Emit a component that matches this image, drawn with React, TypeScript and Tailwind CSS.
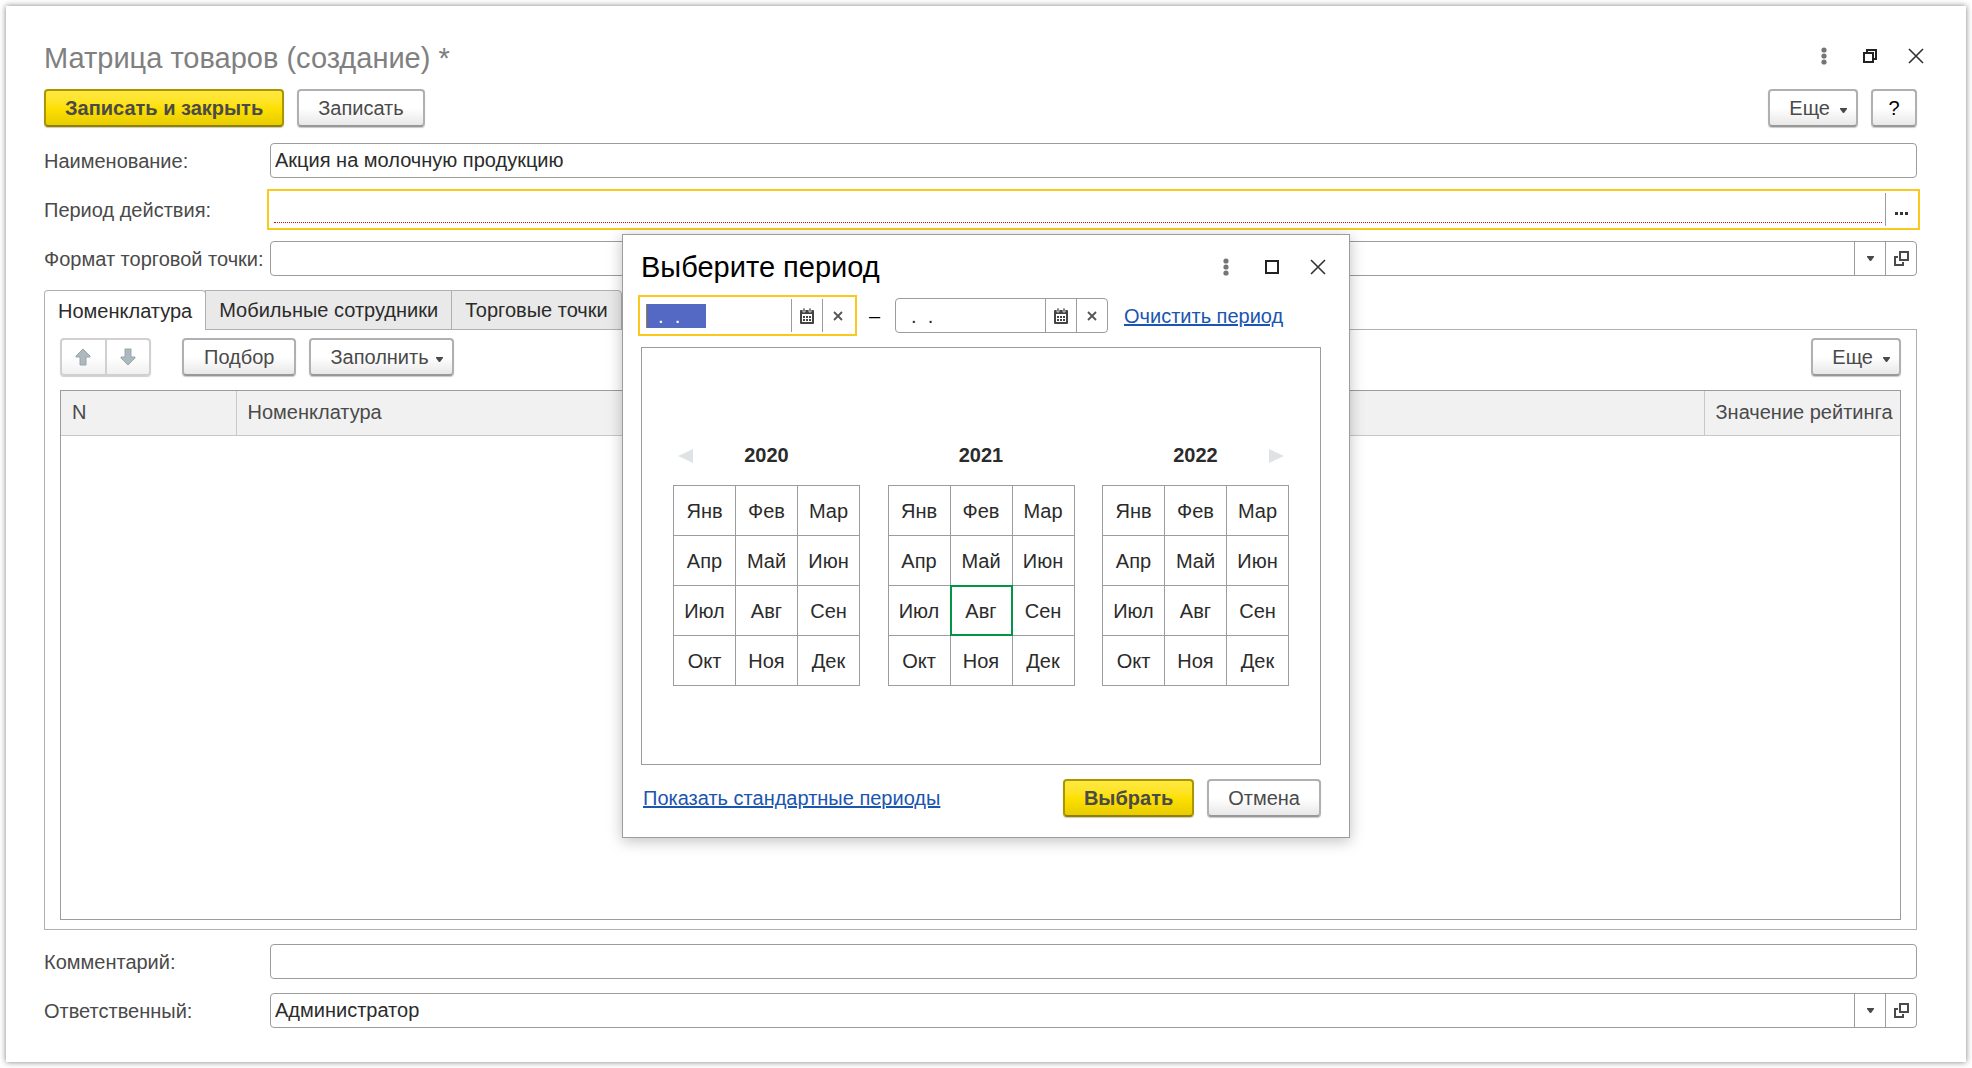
import type { ReactNode } from 'react'

const MONTHS = ['Янв', 'Фев', 'Мар', 'Апр', 'Май', 'Июн', 'Июл', 'Авг', 'Сен', 'Окт', 'Ноя', 'Дек']
const YEARS = [2020, 2021, 2022]
const ROWS = [0, 3, 6, 9]

function Caret({ className = '' }: { className?: string }) {
  return (
    <svg width="7" height="5" viewBox="0 0 7 5" fill="#4a4a4a" aria-hidden="true" className={className}>
      <path d="M0 0h7v1L4 5H3L0 1z" />
    </svg>
  )
}

function Dots() {
  return (
    <svg width="6" height="18" viewBox="0 0 6 18" fill="#757575" aria-hidden="true">
      <circle cx="3" cy="3" r="2.6" />
      <circle cx="3" cy="9" r="2.6" />
      <circle cx="3" cy="15" r="2.6" />
    </svg>
  )
}

function Cross() {
  return (
    <svg width="16" height="16" viewBox="0 0 16 16" stroke="#333" strokeWidth="1.6" aria-hidden="true">
      <path d="M1 1l14 14M15 1L1 15" />
    </svg>
  )
}

function SmallCross() {
  return (
    <svg width="10" height="10" viewBox="0 0 10 10" stroke="#555" strokeWidth="1.8" aria-hidden="true">
      <path d="M1 1l8 8M9 1L1 9" />
    </svg>
  )
}

function OpenIcon() {
  return (
    <svg width="15" height="15" viewBox="0 0 15 15" fill="none" stroke="#4a4a4a" strokeWidth="2" aria-hidden="true">
      <path d="M6 1h8v8H6zM4 6H1v8h8v-3" />
    </svg>
  )
}

function CalendarIcon() {
  return (
    <svg width="14" height="16" viewBox="0 0 14 16" aria-hidden="true">
      <path d="M0 3q0-1 1-1h12q1 0 1 1v12q0 1-1 1H1q-1 0-1-1z" fill="#444" />
      <path d="M2 6h10v8H2z" fill="#fff" />
      <path d="M3 0h2v4H3zM9 0h2v4H9z" fill="#444" stroke="#fff" strokeWidth="0.7" />
      <path d="M3 8h2v2H3zM6 8h2v2H6zM9 8h2v2H9zM3 11h2v2H3zM6 11h2v2H6zM9 11h2v2H9z" fill="#444" />
    </svg>
  )
}

function WindowButton({ children, label }: { children: ReactNode; label: string }) {
  return (
    <button type="button" aria-label={label} className="flex h-8 w-[46px] items-center justify-center">
      {children}
    </button>
  )
}

function Button({ children, className = 'px-[19px]', label }: { children: ReactNode; className?: string; label?: string }) {
  return (
    <button
      type="button"
      aria-label={label}
      className={`flex h-[38px] items-center justify-center rounded-[4px] border-2 border-[#b0b0b0] border-b-[#989898] bg-linear-to-b from-white from-50% to-[#e8e8e8] text-[#4a4a4a] shadow-[0_1px_1px_#c8c8c8] ${className}`}
    >
      {children}
    </button>
  )
}

function PrimaryButton({ children }: { children: ReactNode }) {
  return (
    <button
      type="button"
      className="flex h-[38px] items-center justify-center rounded-[4px] border-2 border-[#ab9600] border-b-[#918000] bg-linear-to-b from-[#ffe940] via-[#fde000] to-[#e8cc00] px-[19px] font-bold text-[#4a4a4a] shadow-[0_1px_1px_#c8c8c8]"
    >
      {children}
    </button>
  )
}

function FieldButton({ children, label }: { children: ReactNode; label: string }) {
  return (
    <button
      type="button"
      aria-label={label}
      className="flex w-[31px] shrink-0 items-center justify-center self-stretch border-l border-[#9c9c9c]"
    >
      {children}
    </button>
  )
}

type FieldProps = { id: string; label: string; value?: string; children?: ReactNode }

function Field({ id, label, value = '', children }: FieldProps) {
  return (
    <div className="grid grid-cols-[226px_1fr] items-center">
      <label htmlFor={id} className="whitespace-nowrap">{label}</label>
      <div className="flex h-[35px] items-center rounded-[4px] border border-[#9c9c9c] bg-white">
        <input id={id} defaultValue={value} className="h-full min-w-0 flex-1 px-1 text-[#2b2b2b] outline-none" />
        {children}
      </div>
    </div>
  )
}

function RefButtons() {
  return (
    <>
      <FieldButton label="Выбрать из списка"><Caret /></FieldButton>
      <FieldButton label="Открыть"><OpenIcon /></FieldButton>
    </>
  )
}

function Year({ year }: { year: number }) {
  return (
    <table className="w-[187px] table-fixed border-collapse text-center text-[#2b2b2b]">
      <caption className="pb-[18px] font-bold leading-6">{year}</caption>
      <tbody>
        {ROWS.map((row) => (
          <tr key={row}>
            {MONTHS.slice(row, row + 3).map((month) => (
              <td key={month} className="h-[50px] border border-[#9c9c9c] p-0">
                <button
                  type="button"
                  className={
                    year === 2021 && month === 'Авг'
                      ? 'size-full outline-2 -outline-offset-1 outline-[#009646]'
                      : 'size-full'
                  }
                >
                  {month}
                </button>
              </td>
            ))}
          </tr>
        ))}
      </tbody>
    </table>
  )
}

function PeriodDialog() {
  return (
    <div className="absolute inset-0 flex items-center justify-center pt-1">
      <section
        role="dialog"
        aria-labelledby="period-title"
        className="w-[728px] border border-[#9c9c9c] bg-white pt-[14px] pr-7 pb-5 pl-[18px] shadow-[0_3px_14px_rgba(0,0,0,0.25)]"
      >
        <header className="flex h-9 items-center justify-between">
          <h2 id="period-title" className="text-[29px] text-black">Выберите период</h2>
          <div className="-mr-5 flex">
            <WindowButton label="Меню"><Dots /></WindowButton>
            <WindowButton label="Развернуть">
              <svg width="14" height="14" viewBox="0 0 14 14" fill="none" stroke="#222" strokeWidth="2" aria-hidden="true">
                <path d="M1 1h12v12H1z" />
              </svg>
            </WindowButton>
            <WindowButton label="Закрыть"><Cross /></WindowButton>
          </div>
        </header>

        <div className="mt-[13px] flex items-center">
          <div className="flex h-[35px] w-[213px] items-center border border-white outline-2 outline-offset-1 outline-[#fac81e]">
            <input
              aria-label="Начало периода"
              defaultValue={'\u00a0\u00a0.\u00a0\u00a0.'}
              className="ml-1 h-6 w-[60px] border-l border-[#a08040] bg-[#5469c3] text-white outline-none"
            />
            <span className="flex-1" />
            <FieldButton label="Календарь"><CalendarIcon /></FieldButton>
            <FieldButton label="Очистить"><SmallCross /></FieldButton>
          </div>
          <span className="w-[41px] text-center text-black">–</span>
          <div className="flex h-[35px] w-[213px] items-center rounded-[4px] border border-[#9c9c9c]">
            <input
              aria-label="Конец периода"
              defaultValue={'\u00a0\u00a0.\u00a0\u00a0.'}
              className="ml-1 min-w-0 flex-1 text-[#2b2b2b] outline-none"
            />
            <FieldButton label="Календарь"><CalendarIcon /></FieldButton>
            <FieldButton label="Очистить"><SmallCross /></FieldButton>
          </div>
          <a href="#clear" className="ml-4 whitespace-nowrap text-[#1a55b0] underline">Очистить период</a>
        </div>

        <div className="relative mt-[14px] flex h-[418px] items-start justify-between border border-[#9c9c9c] px-[31px] pt-[95px]">
          {YEARS.map((year) => <Year key={year} year={year} />)}
          <button type="button" aria-label="Предыдущие годы" className="absolute top-[101px] left-9">
            <svg width="15" height="14" viewBox="0 0 15 14" fill="#dfe3e5" aria-hidden="true"><path d="M15 0v14L0 7z" /></svg>
          </button>
          <button type="button" aria-label="Следующие годы" className="absolute top-[101px] right-9">
            <svg width="15" height="14" viewBox="0 0 15 14" fill="#dfe3e5" aria-hidden="true"><path d="M0 0v14l15-7z" /></svg>
          </button>
        </div>

        <footer className="mt-[14px] flex items-center gap-[13px]">
          <a href="#standard" className="mr-auto pl-0.5 text-[#1a55b0] underline">Показать стандартные периоды</a>
          <PrimaryButton>Выбрать</PrimaryButton>
          <Button>Отмена</Button>
        </footer>
      </section>
    </div>
  )
}

export default function App() {
  return (
    <div className="relative flex min-h-screen bg-white p-1.5 font-['Liberation_Sans',Arial,sans-serif] text-[20px] leading-6 text-[#4a4a4a]">
      <main className="flex flex-1 flex-col bg-white pt-8 pr-[49px] pb-[34px] pl-[38px] shadow-[0_0_6px_rgba(0,0,0,0.5)]">
        <header className="flex h-9 items-center justify-between">
          <h1 className="pt-1 text-[29px] text-[#808080]">Матрица товаров (создание) *</h1>
          <div className="-mr-[22px] flex">
            <WindowButton label="Меню"><Dots /></WindowButton>
            <WindowButton label="Свернуть в окно">
              <svg width="14" height="14" viewBox="0 0 14 14" fill="none" stroke="#222" strokeWidth="2" aria-hidden="true">
                <path d="M1 4h9v9H1zM4 4V1h9v9h-3" />
              </svg>
            </WindowButton>
            <WindowButton label="Закрыть"><Cross /></WindowButton>
          </div>
        </header>

        <div className="mt-[15px] flex gap-[13px]">
          <PrimaryButton>Записать и закрыть</PrimaryButton>
          <Button>Записать</Button>
          <span className="flex-1" />
          <Button className="gap-[10px] pr-[9px] pl-[19px]">Еще <Caret className="mt-1" /></Button>
          <Button className="w-[46px] text-black" label="Справка">?</Button>
        </div>

        <div className="mt-4 flex flex-col gap-[14px]">
          <Field id="name" label="Наименование:" value="Акция на молочную продукцию" />
          <div className="grid grid-cols-[226px_1fr] items-center">
            <label htmlFor="period">Период действия:</label>
            <div className="flex h-[35px] items-center border border-white bg-white outline-2 outline-offset-1 outline-[#fac81e]">
              <input id="period" className="mx-[3px] mb-0.5 h-[28px] min-w-0 flex-1 border-b border-dotted border-[#f00000] outline-none" />
              <FieldButton label="Выбрать период">
                <svg width="13" height="3" viewBox="0 0 13 3" fill="#333" aria-hidden="true" className="mt-2">
                  <path d="M0 0h3v3H0zM5 0h3v3H5zM10 0h3v3h-3z" />
                </svg>
              </FieldButton>
            </div>
          </div>
          <Field id="format" label="Формат торговой точки:"><RefButtons /></Field>
        </div>

        <div role="tablist" className="mt-[14px] flex whitespace-nowrap text-[#2b2b2b]">
          <button type="button" role="tab" aria-selected="true" className="relative z-10 -mb-px h-10 rounded-t-[4px] border border-b-0 border-[#b0b0b0] bg-white px-[13px]">
            Номенклатура
          </button>
          <button type="button" role="tab" aria-selected="false" className="-mb-px -ml-px h-10 border border-[#b0b0b0] bg-[#e9e9e9] px-[13px]">
            Мобильные сотрудники
          </button>
          <button type="button" role="tab" aria-selected="false" className="-mb-px -ml-px h-10 rounded-tr-[4px] border border-[#b0b0b0] bg-[#e9e9e9] px-[13px]">
            Торговые точки
          </button>
        </div>

        <div role="tabpanel" className="flex flex-1 flex-col border border-[#b0b0b0] px-[15px] pt-2 pb-[9px]">
          <div className="flex">
            <div className="flex h-[38px] w-[91px] rounded-[4px] border-2 border-[#d0d0d0] bg-linear-to-b from-white from-50% to-[#f0f0f0] shadow-[0_1px_1px_#d0d0d0]">
              <button type="button" aria-label="Переместить вверх" className="flex flex-1 items-center justify-center border-r-2 border-[#d0d0d0]">
                <svg width="16" height="18" viewBox="0 0 16 18" fill="#adb9be" stroke="#98a5ab" aria-hidden="true"><path d="M8 1l7 7v1h-4v8H5V9H1V8z" /></svg>
              </button>
              <button type="button" aria-label="Переместить вниз" className="flex flex-1 items-center justify-center">
                <svg width="16" height="18" viewBox="0 0 16 18" fill="#adb9be" stroke="#98a5ab" aria-hidden="true"><path d="M8 17l7-7V9h-4V1H5v8H1v1z" /></svg>
              </button>
            </div>
            <Button className="ml-[31px] px-5">Подбор</Button>
            <Button className="ml-[13px] gap-[7px] pr-[9px] pl-[19px]">Заполнить <Caret className="mt-1" /></Button>
            <Button className="ml-auto gap-[10px] pr-[9px] pl-[19px]">Еще <Caret className="mt-1" /></Button>
          </div>

          <div className="mt-[14px] flex-1 border border-[#9c9c9c]">
            <table className="w-full table-fixed border-collapse text-left">
              <thead>
                <tr className="h-11 border-b border-[#c8c8c8] bg-[#f1f1f1]">
                  <th className="w-[175px] border-r border-[#c8c8c8] px-[11px] pb-0.5 font-normal">N</th>
                  <th className="border-r border-[#c8c8c8] px-[11px] pb-0.5 font-normal">Номенклатура</th>
                  <th className="w-[196px] px-[11px] pb-0.5 font-normal whitespace-nowrap">Значение рейтинга</th>
                </tr>
              </thead>
            </table>
          </div>
        </div>

        <div className="mt-[14px] flex flex-col gap-[14px]">
          <Field id="comment" label="Комментарий:" />
          <Field id="owner" label="Ответственный:" value="Администратор"><RefButtons /></Field>
        </div>
      </main>
      <PeriodDialog />
    </div>
  )
}
